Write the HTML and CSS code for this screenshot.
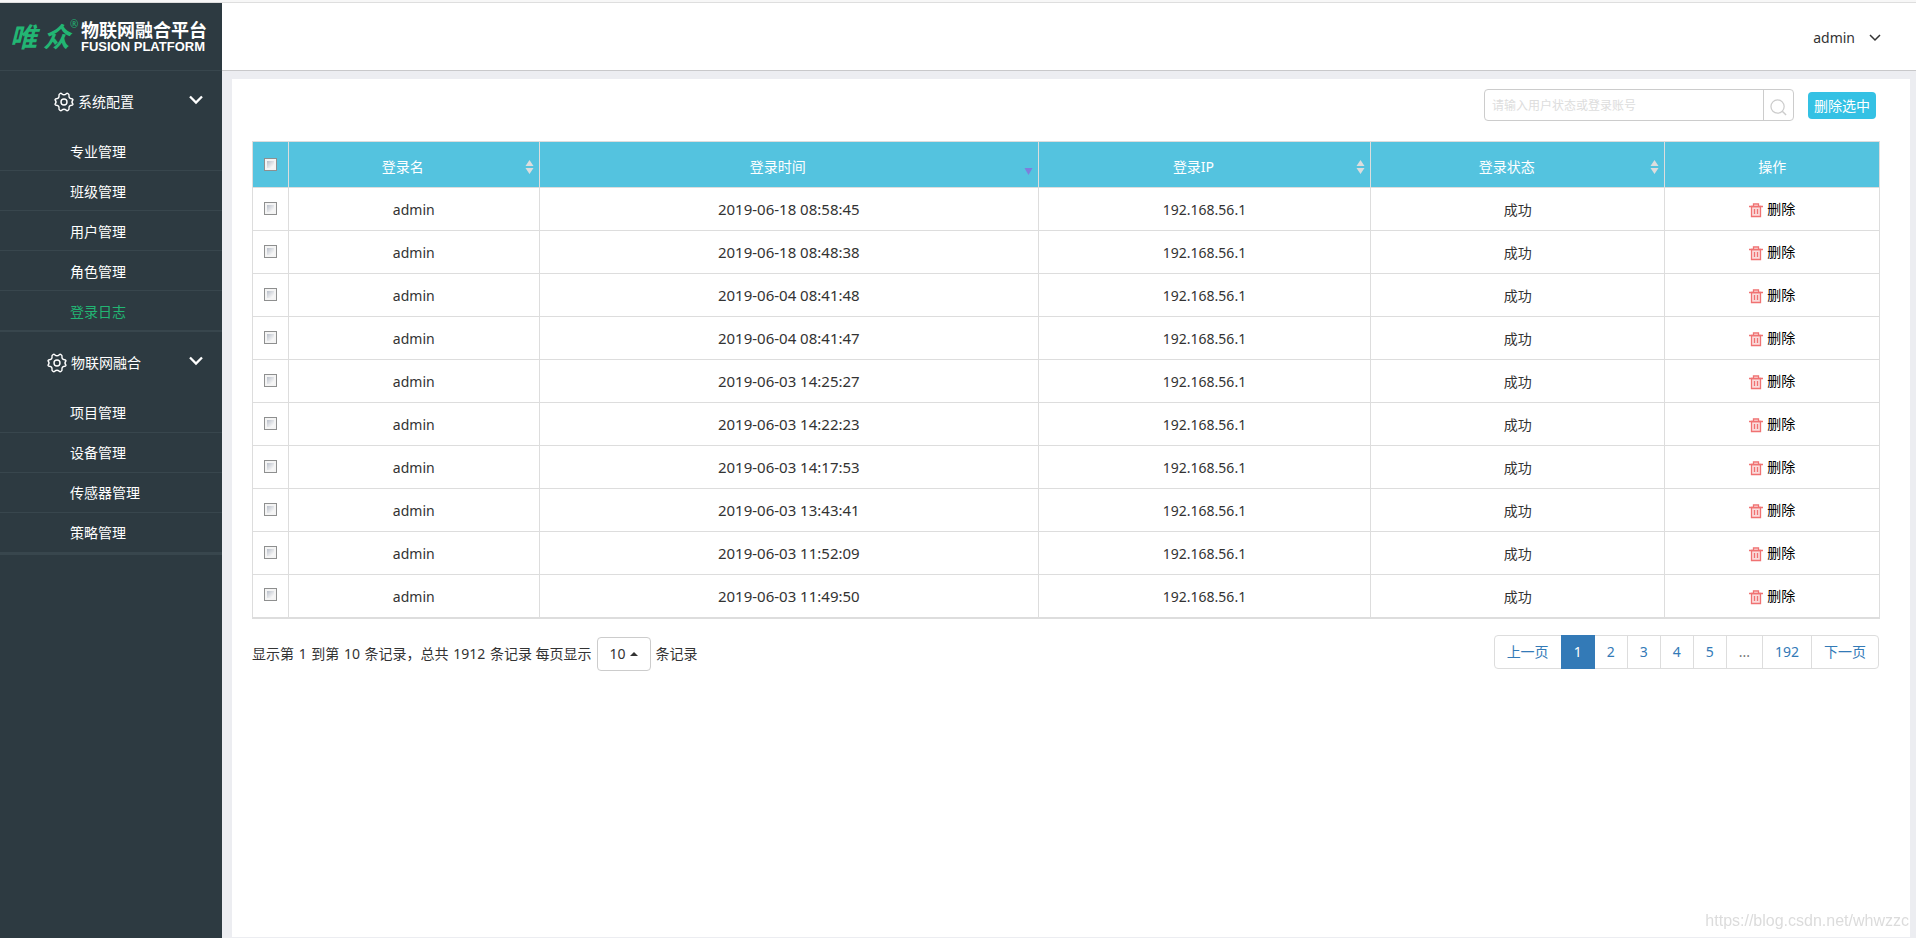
FILE: index.html
```html
<!DOCTYPE html>
<html lang="zh-CN">
<head>
<meta charset="utf-8">
<title>物联网融合平台</title>
<link rel="stylesheet" href="styles.css">
</head>
<body>
<svg class="sprite" aria-hidden="true">
  <symbol id="gear" viewBox="0 0 20 20">
    <path d="M6 1.600 Q7 1 7.700 1.700 Q10 4 12.300 1.700 Q13 1 14 1.600 Q15.300 2.300 15 3.500 Q14.600 6.300 17.500 6.700 Q19.300 7.200 18.900 8 Q17 10 18.900 12 Q19.300 12.800 17.500 13.300 Q14.600 13.700 15 16.500 Q15.300 17.700 14 18.400 Q13 19 12.300 18.300 Q10 16 7.700 18.300 Q7 19 6 18.400 Q4.700 17.700 5 16.500 Q5.400 13.700 2.500 13.300 Q.7 12.800 1.100 12 Q3 10 1.100 8 Q.7 7.200 2.500 6.700 Q5.400 6.300 5 3.500 Q4.700 2.300 6 1.600 Z" fill="none" stroke="currentColor" stroke-width="1.400" stroke-linejoin="round"/>
    <circle cx="10" cy="10" r="3" fill="none" stroke="currentColor" stroke-width="1.400"/>
  </symbol>
  <symbol id="chevron" viewBox="0 0 14 10">
    <path d="M1 1.500 L7 7.500 L13 1.500" fill="none" stroke="currentColor" stroke-width="2.300"/>
  </symbol>
  <symbol id="trash" viewBox="0 0 14 15">
    <path d="M2.500 3.500 H11.500 V13.500 H2.500 Z" fill="#fbdcdc" stroke="#f07272" stroke-width="1.300"/>
    <path d="M0 3.500 H14 M4.500 3.500 V1 H9.500 V3.500 M5.500 6 V11 M8.500 6 V11" fill="none" stroke="#f07272" stroke-width="1.300"/>
  </symbol>
</svg>
<div class="app">
  <aside class="sidebar">
    <div class="logo">
      <div class="brand"><span>唯</span><span>众</span></div>
      <span class="mark">®</span>
      <div class="product"><span class="product-cn">物联网融合平台</span><span class="product-en">FUSION PLATFORM</span></div>
    </div>
    <nav>
      <button class="group"><svg class="gear"><use href="#gear"/></svg><span>系统配置</span><svg class="chev"><use href="#chevron"/></svg></button>
      <ul class="menu">
        <li><a href="#">专业管理</a></li>
        <li><a href="#">班级管理</a></li>
        <li><a href="#">用户管理</a></li>
        <li><a href="#">角色管理</a></li>
        <li><a href="#" class="active">登录日志</a></li>
      </ul>
      <button class="group wide"><svg class="gear"><use href="#gear"/></svg><span>物联网融合</span><svg class="chev"><use href="#chevron"/></svg></button>
      <ul class="menu last">
        <li><a href="#">项目管理</a></li>
        <li><a href="#">设备管理</a></li>
        <li><a href="#">传感器管理</a></li>
        <li><a href="#">策略管理</a></li>
      </ul>
    </nav>
  </aside>
  <div class="main">
    <header class="topbar">
      <button class="user">admin<svg><path d="M1 1 L6 6 L11 1" fill="none" stroke="currentColor" stroke-width="1.500"/></svg></button>
    </header>
    <main class="content">
      <section class="panel">
        <form class="toolbar">
          <div class="search">
            <input type="text" aria-label="搜索" placeholder="请输入用户状态或登录账号">
            <button type="button" aria-label="搜索"><svg viewBox="0 0 18 18"><circle cx="8" cy="8" r="7" fill="none" stroke="#ccc" stroke-width="1.300"/><path d="M13 13 L17 17" stroke="#ccc" stroke-width="1.500"/></svg></button>
          </div>
          <button type="button" class="delete-selected">删除选中</button>
        </form>
        <table>
          <colgroup><col class="c-check"><col class="c-name"><col class="c-time"><col class="c-ip"><col class="c-state"><col class="c-action"></colgroup>
          <thead>
            <tr>
              <th><input type="checkbox" aria-label="全选"></th>
              <th class="sort">登录名</th>
              <th class="sort desc">登录时间</th>
              <th class="sort">登录IP</th>
              <th class="sort">登录状态</th>
              <th>操作</th>
            </tr>
          </thead>
          <tbody id="rows"></tbody>
        </table>
        <footer class="table-foot">
          <div class="info"><span>显示第 <b>1</b> 到第 <b>10</b> 条记录，总共 <b>1912</b> 条记录 每页显示</span><button class="size">10<i class="caret"></i></button><span>条记录</span></div>
          <nav class="pages" aria-label="分页">
            <a href="#">上一页</a><a href="#" class="current">1</a><a href="#">2</a><a href="#">3</a><a href="#">4</a><a href="#">5</a><span>...</span><a href="#">192</a><a href="#">下一页</a>
          </nav>
        </footer>
      </section>
    </main>
  </div>
</div>
<div class="watermark">https://blog.csdn.net/whwzzc</div>
<script src="app.js"></script>
</body>
</html>
```
FILE: styles.css
```css
* { box-sizing: border-box; }
body {
  margin: 0;
  font: 14px/20px "Noto Sans", "Noto Sans CJK SC", sans-serif;
  color: #333;
  background: #ecedf1;
}
button, input { font: inherit; color: inherit; }
button { padding: 0; border: 0; background: none; cursor: pointer; }
a { text-decoration: none; }
.sprite { position: absolute; width: 0; height: 0; }
.app {
  display: flex;
  min-height: 100vh;
  padding-top: 3px;
  background: linear-gradient(#f7f7f7 2px, #dedede 2px, #dedede 3px, transparent 3px);
}

.sidebar { flex: none; width: 222px; background: #2d3a41; color: #fff; }
.logo {
  display: flex;
  align-items: center;
  height: 68px;
  padding-left: 10px;
  border-bottom: 1px solid #38464d;
}
.brand {
  display: flex;
  gap: 6px;
  width: 60px;
  font-size: 27px;
  line-height: 32px;
  font-weight: bold;
  font-style: italic;
  color: #22b573;
}
.mark { align-self: flex-start; width: 11px; margin-top: 14px; font-size: 10px; line-height: 14px; color: #22b573; }
.product { display: flex; flex-direction: column; gap: 1px; padding-bottom: 1px; white-space: nowrap; }
.product-cn { font: bold 18px/20px "Noto Sans CJK SC", sans-serif; }
.product-en { font: bold 13px/14px "Liberation Sans", sans-serif; }
.group {
  display: grid;
  grid-template-columns: auto auto 1fr;
  align-items: center;
  column-gap: 4px;
  width: 100%;
  height: 60px;
  padding: 2px 19px 0 54px;
}
.group.wide { height: 61px; padding: 0 19px 0 47px; }
.gear { width: 20px; height: 20px; }
.chev { justify-self: end; width: 14px; height: 10px; margin-bottom: 4px; }
.menu { margin: 0; padding: 0; list-style: none; border-bottom: 1px solid #38464d; }
.menu.last { border-bottom-width: 2px; }
.menu a {
  display: block;
  height: 40px;
  padding: 11px 0 0 70px;
  border-bottom: 1px solid #38464d;
  color: #fff;
}
.menu.last a { padding-top: 10px; }
.menu .active { color: #22b573; }

.main { flex: 1; min-width: 0; display: flex; flex-direction: column; }
.topbar {
  display: flex;
  justify-content: flex-end;
  align-items: center;
  height: 68px;
  padding: 2px 35px 0 0;
  border-bottom: 1px solid #c8c8ca;
  background: #fff;
}
.user { display: flex; align-items: center; gap: 14px; }
.user svg { width: 12px; height: 8px; }
.content { flex: 1; display: flex; padding: 8px 6px 1px 10px; }
.panel { flex: 1; min-width: 0; padding: 10px 30px 10px 20px; background: #fff; }
.toolbar { display: flex; justify-content: flex-end; align-items: center; gap: 14px; height: 32px; padding-right: 4px; margin-bottom: 20px; }
.search { display: flex; width: 310px; height: 32px; border: 1px solid #ccc; border-radius: 4px; }
.search input { flex: 1; min-width: 0; padding: 2px 8px 0 7px; border: 0; outline: 0; background: none; font-size: 12px; }
.search input::placeholder { color: #ddd; }
.search button { display: grid; place-items: center; width: 30px; padding-top: 4px; border-left: 1px solid #ccc; }
.search svg { width: 17px; height: 17px; }
.delete-selected { width: 68px; height: 27px; padding-top: 1px; border-radius: 4px; background: #34c1e4; color: #fff; }

table { width: 100%; table-layout: fixed; border-collapse: collapse; border-bottom: 2px solid #ddd; }
th, td { height: 43px; padding: 2px 0 0; border: 1px solid #ddd; text-align: center; font-weight: normal; }
th { height: 46px; background: #54c3df; color: #fff; padding-top: 4px; }
.c-check { width: 36px; }
.c-name { width: 15.4%; }
.c-time { width: 30.7%; }
.c-ip { width: 20.4%; }
.c-state { width: 18.1%; }
.sort { padding-right: 22px; background: #54c3df url("data:image/svg+xml,%3Csvg xmlns='http://www.w3.org/2000/svg' width='9' height='16'%3E%3Cpath d='M4.5 1L8.500 7H.5zM4.500 15L8.500 9H.5z' fill='%23ddd'/%3E%3C/svg%3E") no-repeat right 5px top 17px; }
.sort.desc { background-image: url("data:image/svg+xml,%3Csvg xmlns='http://www.w3.org/2000/svg' width='9' height='16'%3E%3Cpath d='M4.500 16L8.500 9H.5z' fill='%237d7fdc'/%3E%3C/svg%3E"); }
input[type="checkbox"] {
  appearance: none;
  display: block;
  width: 13px;
  height: 13px;
  margin: 0 auto 4px;
  padding: 2px;
  border: 1px solid #8e8f8f;
  background: linear-gradient(135deg, #b9bfca, #f6f6f6 80%) content-box, #f4f4f4;
}
td.time { padding-top: 0; font-size: 15px; }
.remove { display: inline-flex; align-items: center; gap: 4px; padding-top: 2px; color: #000; }
.remove svg { width: 14px; height: 15px; margin-top: 2px; }

.table-foot { display: flex; justify-content: space-between; padding: 16px 1px 0 0; }
.info { display: flex; align-items: center; gap: 5px; padding-top: 2px; }
.info b { padding: 0 1px; font-weight: normal; }
.size { display: flex; align-items: center; justify-content: center; gap: 4px; width: 54px; height: 34px; border: 1px solid #ccc; border-radius: 4px; }
.caret { border: 4px solid transparent; border-top: 0; border-bottom-color: #333; }
.pages { display: flex; }
.pages > * { height: 34px; padding: 6px 12px; margin-left: -1px; border: 1px solid #ddd; color: #337ab7; }
.pages > :first-child { border-radius: 4px 0 0 4px; }
.pages > :last-child { border-radius: 0 4px 4px 0; }
.pages span { color: #777; }
.pages .current { z-index: 1; border-color: #337ab7; background: #337ab7; color: #fff; }
.watermark { position: fixed; right: 7px; bottom: 7px; font: 16px/20px "Liberation Sans", sans-serif; color: #dcdcdc; }
```
FILE: app.js
```js
const times = [
  "2019-06-18 08:58:45", "2019-06-18 08:48:38", "2019-06-04 08:41:48", "2019-06-04 08:41:47",
  "2019-06-03 14:25:27", "2019-06-03 14:22:23", "2019-06-03 14:17:53", "2019-06-03 13:43:41",
  "2019-06-03 11:52:09", "2019-06-03 11:49:50"
];
document.getElementById("rows").innerHTML = times.map(time => `
  <tr>
    <td><input type="checkbox" aria-label="选择 ${time}"></td>
    <td>admin</td>
    <td class="time">${time}</td>
    <td>192.168.56.1</td>
    <td>成功</td>
    <td><button class="remove"><svg><use href="#trash"/></svg>删除</button></td>
  </tr>`).join("");
```
